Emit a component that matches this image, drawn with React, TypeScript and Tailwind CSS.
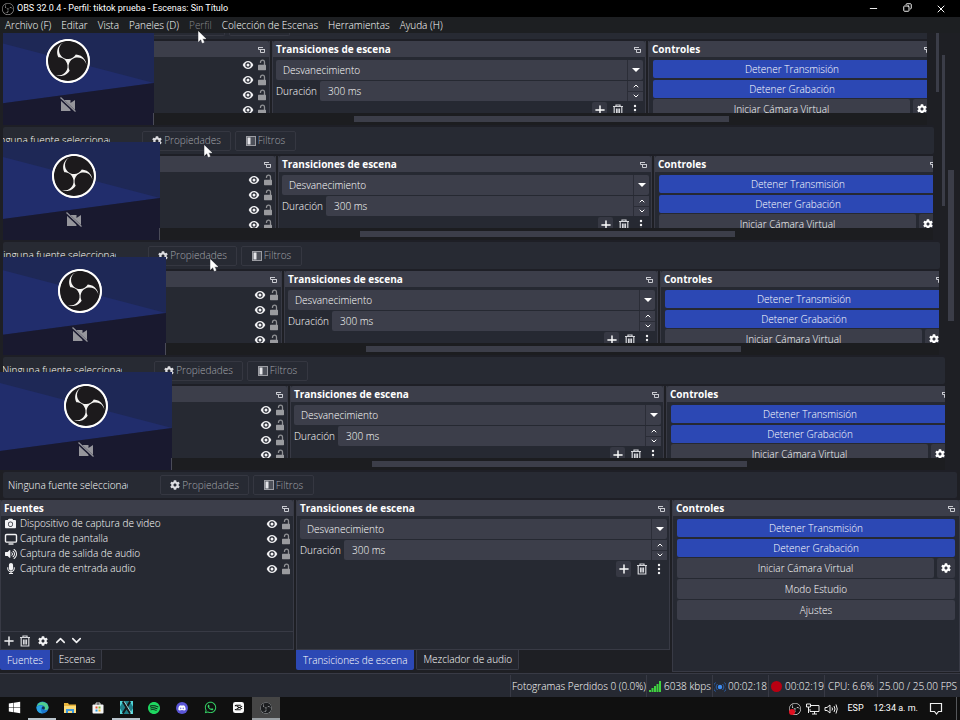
import { useId, type ReactNode } from "react";
import { SiObsstudio, SiSpotify } from "react-icons/si";
import { FaCamera, FaCog, FaDiscord, FaMicrophone, FaVolumeUp, FaWhatsapp, FaWindows } from "react-icons/fa";
import { ChevronDown, ChevronUp, Copy, Minus, Plus, X } from "lucide-react";

const sources = [
  "Dispositivo de captura de video",
  "Captura de pantalla",
  "Captura de salida de audio",
  "Captura de entrada audio",
];

function DisplayIcon() {
  return (
    <svg viewBox="0 0 14 12" className="h-3 w-3.5" fill="none" stroke="#f2f2f4" strokeWidth="1.4">
      <rect x="1.5" y="1.5" width="11" height="7.6" rx="1.2" />
      <path d="M4.500 11h5" />
    </svg>
  );
}

function EyeIcon() {
  return (
    <svg viewBox="0 0 12 10" className="h-[10px] w-3">
      <path d="M.7 5C2 2.400 3.800 1 6 1s4 1.400 5.300 4C10 7.600 8.200 9 6 9S2 7.600.7 5z" fill="#f4f4f6" />
      <circle cx="6" cy="5" r="2.700" fill="#262932" />
      <circle cx="6" cy="5" r="1.500" fill="#f4f4f6" />
    </svg>
  );
}

function LockIcon() {
  return (
    <svg viewBox="0 0 10 12" className="h-3 w-[10px]">
      <path d="M3.500 4V3.200a2 2 0 0 1 4 0V6" fill="none" stroke="#8f9094" strokeWidth="1.300" />
      <rect x="1" y="5.800" width="8" height="5.400" rx=".6" fill="#9a9b9f" />
    </svg>
  );
}

function FloatIcon() {
  return (
    <svg viewBox="0 0 8 8" className="h-2 w-2" fill="none" stroke="#c9cad0" strokeWidth="1">
      <path d="M0 1.500h5M.500 1v2.500h2" />
      <path d="M2 3.500h5M2.500 4v2.500h4V4" />
    </svg>
  );
}

function TrashIcon() {
  return (
    <svg viewBox="0 0 12 12" className="h-3 w-3" fill="none" stroke="#d6d7db" strokeWidth="1.200">
      <path d="M1 2.500h10M4 2V1h4v1M2.200 3v8h7.600V3M4.500 4.500v5M6 4.500v5M7.500 4.500v5" />
    </svg>
  );
}

function DotsIcon() {
  return (
    <svg viewBox="0 0 4 12" className="h-3 w-1" fill="#f2f2f4">
      <circle cx="2" cy="2" r="1.200" />
      <circle cx="2" cy="6" r="1.200" />
      <circle cx="2" cy="10" r="1.200" />
    </svg>
  );
}

function Cursor() {
  return (
    <svg viewBox="0 0 9 13" className="h-[13px] w-[9px]">
      <path d="M.5.5v10l2.400-2.200 1.500 3.700 1.700-.7-1.600-3.600h3.400z" fill="#fff" stroke="#fff" strokeWidth=".5" />
    </svg>
  );
}

function SourceIcon({ index }: { index: number }) {
  if (index === 0) return <FaCamera className="h-[11px] w-[11px]" />;
  if (index === 1) return <DisplayIcon />;
  if (index === 2) return <FaVolumeUp className="h-3 w-3" />;
  return <FaMicrophone className="h-[11px] w-[10px]" />;
}

function DockHeader({ title }: { title?: string }) {
  return (
    <div className="flex h-4 shrink-0 items-center justify-between rounded-t-[2px] bg-[#3c3e4a] px-[3px] pt-px">
      <h2 className="text-[10px] leading-[15px] font-bold text-white">{title}</h2>
      <button aria-label="Desacoplar panel">
        <FloatIcon />
      </button>
    </div>
  );
}

function DockBody({ children }: { children: ReactNode }) {
  return (
    <div className="flex flex-1 flex-col border-r border-b border-l border-[#383a45] bg-[#262932]">{children}</div>
  );
}

function Tabs({ active, other }: { active: string; other: string }) {
  return (
    <div className="mb-[2px] flex h-5 shrink-0 gap-[2px]">
      <button className="rounded-b-[2px] bg-[#2c48b4] px-[7px] text-white">{active}</button>
      <button className="rounded-b-[2px] border border-t-0 border-[#383a45] bg-[#24262e] px-[6px]">{other}</button>
    </div>
  );
}

function SourcesDock({ mirror }: { mirror?: boolean }) {
  return (
    <section className="flex min-w-0 flex-[294] flex-col">
      <DockBody>
        <DockHeader title={mirror ? undefined : "Fuentes"} />
        <ul className="flex flex-1 flex-col">
          {sources.map((name, i) => (
            <li key={name} className="flex h-[15px] items-center pr-[2px] pl-[2px]">
              {!mirror && (
                <>
                  <span className="mr-[2px] flex w-[15px] shrink-0 justify-center text-[#f2f2f4]">
                    <SourceIcon index={i} />
                  </span>
                  <span className="whitespace-nowrap">{name}</span>
                </>
              )}
              <button aria-label="Visibilidad" className="ml-auto">
                <EyeIcon />
              </button>
              <button aria-label="Bloqueo" className="ml-[3px]">
                <LockIcon />
              </button>
            </li>
          ))}
        </ul>
        {!mirror && (
          <div className="flex h-[18px] items-center border-t border-[#383a45] pl-[2px] text-[#f2f2f4]">
            <button aria-label="Agregar" className="flex w-3 justify-center">
              <Plus size={14} strokeWidth={2.5} className="shrink-0" />
            </button>
            <button aria-label="Eliminar" className="ml-1 flex w-3 justify-center">
              <TrashIcon />
            </button>
            <button aria-label="Propiedades" className="ml-1.5 flex w-3 justify-center">
              <FaCog size={10} />
            </button>
            <button aria-label="Subir" className="ml-[5px] flex w-3 justify-center">
              <ChevronUp size={15} strokeWidth={2.5} className="shrink-0" />
            </button>
            <button aria-label="Bajar" className="ml-1 flex w-3 justify-center">
              <ChevronDown size={15} strokeWidth={2.5} className="shrink-0" />
            </button>
          </div>
        )}
      </DockBody>
      {!mirror && <Tabs active="Fuentes" other="Escenas" />}
    </section>
  );
}

function TransitionsDock({ mirror }: { mirror?: boolean }) {
  const id = useId();
  return (
    <section className="flex min-w-0 flex-[374] flex-col">
      <DockBody>
        <DockHeader title="Transiciones de escena" />
        <div className="flex flex-col pt-[3px] pr-[2px] pl-[3px]">
          <div className="relative">
            <select
              aria-label="Transición"
              className="block h-5 w-full appearance-none rounded-[2px] bg-[#3c3e4a] pl-[7px] text-[10px] outline-none"
            >
              <option>Desvanecimiento</option>
            </select>
            <span className="pointer-events-none absolute inset-y-0 right-0 flex w-4 items-center justify-center border-l border-[#2b2d37]">
              <span className="border-x-[4px] border-t-[4px] border-x-transparent border-t-white" />
            </span>
          </div>
          <div className="mt-px flex h-5 items-center">
            <label htmlFor={id} className="w-11 shrink-0">
              Duración
            </label>
            <input
              id={id}
              type="text"
              defaultValue="300 ms"
              className="h-5 min-w-0 flex-1 rounded-l-[2px] bg-[#3c3e4a] pl-2 text-[10px] outline-none"
            />
            <span className="flex h-5 w-4 shrink-0 flex-col gap-px rounded-r-[2px] border-l border-[#2b2d37] bg-[#2b2d37]">
              <button aria-label="Aumentar" className="flex flex-1 items-center justify-center bg-[#3c3e4a]">
                <ChevronUp size={8} strokeWidth={3} />
              </button>
              <button aria-label="Reducir" className="flex flex-1 items-center justify-center bg-[#3c3e4a]">
                <ChevronDown size={8} strokeWidth={3} />
              </button>
            </span>
          </div>
          <div className="flex h-[17px] items-center justify-end text-white">
            <button
              aria-label="Agregar transición"
              className="flex h-4 w-[15px] items-center justify-center rounded-[2px] bg-[#363843]"
            >
              <Plus size={14} strokeWidth={2.5} />
            </button>
            <button aria-label="Eliminar transición" className="ml-[5px]">
              <TrashIcon />
            </button>
            <button aria-label="Más opciones" className="mr-1.5 ml-[9px]">
              <DotsIcon />
            </button>
          </div>
        </div>
      </DockBody>
      {!mirror && <Tabs active="Transiciones de escena" other="Mezclador de audio" />}
    </section>
  );
}

function ControlsDock({ mirror }: { mirror?: boolean }) {
  return (
    <section className="flex min-w-0 flex-[288] flex-col">
      <DockBody>
        <DockHeader title="Controles" />
        <div className="flex flex-col gap-px px-1 pt-[3px]">
          <div className="flex flex-col gap-[2px]">
            <button className="h-[18px] rounded-[2px] bg-[#2c48b4]">Detener Transmisión</button>
            <button className="h-[18px] rounded-[2px] bg-[#2c48b4]">Detener Grabación</button>
          </div>
          <div className="flex gap-[3px]">
            <button className="h-5 flex-1 rounded-[2px] bg-[#3c3e4a]">Iniciar Cámara Virtual</button>
            <button
              aria-label="Configurar cámara virtual"
              className="flex h-5 w-[18px] items-center justify-center rounded-[2px] bg-[#363843] text-white"
            >
              <FaCog size={10} />
            </button>
          </div>
          {!mirror && (
            <>
              <button className="h-5 rounded-[2px] bg-[#3c3e4a]">Modo Estudio</button>
              <button className="h-5 rounded-[2px] bg-[#3c3e4a]">Ajustes</button>
            </>
          )}
        </div>
      </DockBody>
    </section>
  );
}

function ContextBar({ inset, height, right }: { inset: string; height: string; right: string }) {
  return (
    <div className={`ml-[3px] shrink-0 overflow-hidden border-y-2 border-[#1e1f26] ${height} ${right}`}>
      <div className="h-full rounded-[2px] bg-[#272a33]">
        <div className={`flex h-full items-center ${inset}`}>
          <span className="mr-8 w-[120px] shrink-0 overflow-hidden whitespace-nowrap">Ninguna fuente seleccionada</span>
          <button className="flex h-5 w-[89px] shrink-0 items-center justify-center gap-[2px] rounded-[2px] border border-[#353741] text-[#a3a5ab]">
            <FaCog size={10} className="text-[#dcdce0]" />
            Propiedades
          </button>
          <button className="ml-1 flex h-5 w-[61px] shrink-0 items-center justify-center gap-[2px] rounded-[2px] border border-[#353741] text-[#a3a5ab]">
            <svg viewBox="0 0 10 10" className="size-[10px]">
              <rect x=".5" y=".5" width="9" height="9" fill="#4d5059" stroke="#9b9ca2" />
              <rect x="1.500" y="1.500" width="3" height="7" fill="#e4e4e8" />
            </svg>
            Filtros
          </button>
        </div>
      </div>
    </div>
  );
}

function CameraCard({ box }: { box: string }) {
  return (
    <div className={`absolute -top-3.5 z-10 flex h-[98px] justify-end overflow-hidden ${box}`}>
      <svg viewBox="0 0 172 98" className="h-[98px] w-[172px] shrink-0">
        <rect width="172" height="98" fill="#1e2856" />
        <path d="M0 11L172 56 0 79z" fill="#212d6c" />
        <path d="M0 79L172 56v42H0z" fill="#19192f" />
        <circle cx="86" cy="34" r="21" fill="#1c1a1c" />
        <SiObsstudio x="64" y="12" size={44} color="#f5f4f2" />
        <circle cx="86" cy="34" r="21" fill="none" stroke="#fff" strokeWidth="1.500" />
        <path d="M79 73h9.500v3l4.500-3v11l-4.500-3v3H79z" fill="#96969c" />
        <path d="M78 71l15 14" stroke="#19192f" strokeWidth="3" />
        <path d="M78.500 70.500l15 14" stroke="#96969c" strokeWidth="1.200" />
      </svg>
      <span className="absolute right-0 bottom-0 h-3 w-px bg-[#4a4b58]" />
    </div>
  );
}

type MirrorProps = { clip: string; shift: string; card: string; bar: ReactNode };

function MirrorBand({ clip, shift, card, bar }: MirrorProps) {
  return (
    <div className="relative flex flex-col">
      <div className={`h-[72px] overflow-hidden ${clip}`}>
        <div className={`-mr-[9px] flex h-24 gap-[2px] ${shift}`}>
          <SourcesDock mirror />
          <TransitionsDock mirror />
          <ControlsDock mirror />
        </div>
      </div>
      <div className={`h-3 overflow-hidden bg-[#1c1d20] ${clip}`}>
        <div className={`-mr-[9px] flex h-full items-center ${shift}`}>
          <div className="flex-[378]" />
          <div className="h-1.5 flex-[375] bg-[#3c3e49]" />
          <div className="flex-[207]" />
        </div>
      </div>
      {bar}
      <CameraCard box={card} />
    </div>
  );
}

function StatusItem({ children }: { children: ReactNode }) {
  return <div className="flex items-center border-l border-[#383a45] pt-px">{children}</div>;
}

function TaskButton({ label, state, children }: { label: string; state?: string; children: ReactNode }) {
  return (
    <button
      aria-label={label}
      className={`flex h-full w-7 items-center justify-center border-b-2 ${state ?? "border-transparent"}`}
    >
      {children}
    </button>
  );
}

const menus = ["Archivo (F)", "Editar", "Vista", "Paneles (D)", "Perfil", "Colección de Escenas", "Herramientas", "Ayuda (H)"];

export default function App() {
  return (
    <div className="flex min-h-screen flex-col overflow-hidden bg-[#1e1f24] font-['Open_Sans','Noto_Sans',sans-serif] text-[10px] leading-[15px] font-light text-white">
      <header className="flex h-[17px] items-center bg-black">
        <SiObsstudio className="ml-[2px] h-3 w-3 text-[#a9a9a9]" />
        <h1 className="ml-[3px] flex-1 font-[Roboto,sans-serif] text-[9px] font-normal">
          OBS 32.0.4 - Perfil: tiktok prueba - Escenas: Sin Título
        </h1>
        <div className="mr-[2px] flex">
          <button aria-label="Minimizar" className="flex w-[34px] justify-center">
            <Minus size={11} strokeWidth={2} />
          </button>
          <button aria-label="Restaurar" className="flex w-[34px] justify-center">
            <Copy size={9} strokeWidth={2.5} className="-scale-x-100" />
          </button>
          <button aria-label="Cerrar" className="flex w-[34px] justify-center">
            <X size={12} strokeWidth={2} />
          </button>
        </div>
      </header>

      <nav className="flex h-4 items-center bg-[#1d1f22]">
        {menus.map((m) => (
          <button key={m} className={`px-[5px] whitespace-nowrap ${m === "Perfil" ? "text-[#85878b]" : ""}`}>
            {m}
          </button>
        ))}
      </nav>

      <main className="relative flex flex-col overflow-hidden">
        <div className="mr-[33px] ml-[3px] flex h-2 gap-1 border-b-2 border-[#1e1f26] bg-[#272a33] pl-[133px]">
          <div className="h-[3px] w-[89px] rounded-b-[2px] border border-t-0 border-[#353741]" />
          <div className="h-[3px] w-[61px] rounded-b-[2px] border border-t-0 border-[#353741]" />
        </div>
        <MirrorBand
          clip="ml-[3px] mr-[33px]"
          shift="-ml-[27px]"
          card="left-[3px] w-[151px]"
          bar={<ContextBar inset="-ml-[13px]" height="h-[31px]" right="mr-[26px]" />}
        />
        <MirrorBand
          clip="ml-[3px] mr-[27px]"
          shift="-ml-[21px]"
          card="left-[3px] w-[157px]"
          bar={<ContextBar inset="-ml-[7px]" height="h-[31px]" right="mr-5" />}
        />
        <MirrorBand
          clip="ml-[3px] mr-[21px]"
          shift="-ml-[15px]"
          card="left-[3px] w-[163px]"
          bar={<ContextBar inset="-ml-px" height="h-[31px]" right="mr-[15px]" />}
        />
        <MirrorBand
          clip="mr-[15px]"
          shift="-ml-1.5"
          card="left-0 w-[172px]"
          bar={<ContextBar inset="ml-[5px]" height="h-[30px]" right="mr-[3px]" />}
        />
        <div className="absolute top-0 right-[21px] h-[59px] w-[3px] bg-[#3b3d48]" />
        <div className="absolute top-[22px] right-[15px] h-[151px] w-[3px] bg-[#3b3d48]" />
        <div className="absolute top-[137px] right-1.5 h-[151px] w-1.5 bg-[#3b3d48]" />
        <div className="absolute top-[112px] left-[204px] z-20">
          <Cursor />
        </div>
        <div className="absolute top-[226px] left-[210px] z-20">
          <Cursor />
        </div>
      </main>
      <div className="absolute top-[31px] left-[198px] z-20">
        <Cursor />
      </div>

      <div className="flex min-h-[172px] flex-1 gap-[2px]">
        <SourcesDock />
        <TransitionsDock />
        <ControlsDock />
      </div>

      <footer className="mt-px flex h-6 shrink-0 justify-end border-t border-[#383a45] bg-[#262932] pt-px">
        <StatusItem>
          <span className="w-[135px] pl-px whitespace-nowrap">Fotogramas Perdidos 0 (0.0%)</span>
        </StatusItem>
        <StatusItem>
          <svg viewBox="0 0 12 12" className="mx-[2px] h-3 w-3" fill="#3fd23f">
            <path d="M0 9h2v2H0zM2.500 7h2v4h-2zM5 5h2v6H5zM7.500 3h2v8h-2zM10 0h2v11h-2z" />
          </svg>
          <span className="w-[49px] pl-px whitespace-nowrap">6038 kbps</span>
        </StatusItem>
        <StatusItem>
          <svg viewBox="0 0 12 12" className="mx-px h-3 w-3" fill="none" stroke="#2b62b0">
            <circle cx="6" cy="6" r="2.200" fill="#3f8cf0" stroke="none" />
            <path d="M3.500 3a4 4 0 0 0 0 6M8.500 3a4 4 0 0 1 0 6M1.500 1.500a6 6 0 0 0 0 9M10.500 1.500a6 6 0 0 1 0 9" />
          </svg>
          <span className="w-[41px] pl-px">00:02:18</span>
        </StatusItem>
        <StatusItem>
          <span className="mx-[2px] size-[11px] rounded-full bg-[#b80012]" />
          <span className="w-10 pl-px">00:02:19</span>
        </StatusItem>
        <StatusItem>
          <span className="w-[52px] pl-[3px] whitespace-nowrap">CPU: 6.6%</span>
        </StatusItem>
        <StatusItem>
          <span className="w-[82px] pl-px whitespace-nowrap">25.00 / 25.00 FPS</span>
        </StatusItem>
      </footer>

      <div className="flex h-[23px] shrink-0 items-center bg-[#101010]">
        <TaskButton label="Inicio">
          <FaWindows size={13} />
        </TaskButton>
        <TaskButton label="Edge" state="border-[#b9c4cc]">
          <svg viewBox="0 0 14 14" className="size-[13px]">
            <circle cx="7" cy="7" r="6.500" fill="#1b78d0" />
            <path d="M.6 6.500A6.500 6.500 0 0 1 13.500 7c0 2-1.500 3-3.500 2.600C8.500 9.300 9.500 8 9 6.500 8 4 3 3.500.6 6.500z" fill="#4fcf8f" />
            <path d="M.6 6.500C3 4 6.500 4.500 7 6c-2 1-2.500 4 0 7.500C3 13.500.3 10.500.6 6.500z" fill="#2aa3e4" />
            <circle cx="8" cy="7.500" r="1.600" fill="#10324f" />
          </svg>
        </TaskButton>
        <TaskButton label="Explorador">
          <svg viewBox="0 0 14 12" className="h-3 w-3.5">
            <path d="M1 1h4l1 1.500h7V11H1z" fill="#e9b53c" />
            <path d="M1 4h12v7H1z" fill="#fbdc7a" />
            <path d="M3 11V7h8v4H9V9H5v2z" fill="#3f9be0" />
          </svg>
        </TaskButton>
        <TaskButton label="Tienda">
          <svg viewBox="0 0 12 12" className="size-3">
            <path d="M4 3V1h4v2" fill="none" stroke="#ddd" />
            <rect x=".5" y="2.500" width="11" height="9" rx="1" fill="#f4f4f4" />
            <path d="M3.500 4.500h2v2h-2z" fill="#e8502e" />
            <path d="M6.500 4.500h2v2h-2z" fill="#75b72c" />
            <path d="M3.500 7.500h2v2h-2z" fill="#2a9fe0" />
            <path d="M6.500 7.500h2v2h-2z" fill="#f3b61f" />
          </svg>
        </TaskButton>
        <TaskButton label="X" state="border-[#b9c4cc]">
          <svg viewBox="0 0 14 14" className="size-[13px]">
            <rect width="14" height="14" fill="#1f7f88" />
            <path d="M0 0h4L0 6zM14 0v6l-4-6zM0 14V8l4 6zM14 14h-4l4-6z" fill="#52d5d8" />
            <path d="M3 .5l8 13M11 .5l-8 13" fill="none" stroke="#15181a" strokeWidth="2.200" />
            <path d="M4.500 .5l8 13" fill="none" stroke="#d6f4f4" strokeWidth=".8" />
          </svg>
        </TaskButton>
        <TaskButton label="Spotify">
          <SiSpotify size={12} color="#1ed760" />
        </TaskButton>
        <TaskButton label="Discord">
          <span className="flex size-3 items-center justify-center rounded-full bg-[#5a55d6]">
            <FaDiscord size={8} />
          </span>
        </TaskButton>
        <TaskButton label="WhatsApp">
          <FaWhatsapp size={13} color="#35d366" />
        </TaskButton>
        <TaskButton label="CapCut">
          <svg viewBox="0 0 12 12" className="size-[11px]">
            <rect width="12" height="12" rx="2.500" fill="#fafafa" />
            <path d="M10 4.500L4 7.500M10 7.500L4 4.500M8.500 3.500h-5a1 1 0 0 0-1 1M8.500 8.500h-5a1 1 0 0 1-1-1" fill="none" stroke="#111" strokeWidth="1.200" />
          </svg>
        </TaskButton>
        <TaskButton label="OBS" state="border-[#9aa0a4] bg-[#454545]">
          <SiObsstudio size={12} color="#a9acae" className="rounded-full bg-[#1c1e20]" />
        </TaskButton>
        <div className="ml-auto flex h-full items-center font-[Roboto,sans-serif] text-[9px] font-normal">
          <span className="relative mr-[5px]">
            <SiObsstudio size={12} />
            <span className="absolute bottom-0 left-0 size-[6px] rounded-full bg-[#e01020]" />
          </span>
          <svg viewBox="0 0 14 12" className="mr-1 h-3 w-3.5" fill="none" stroke="#eee">
            <path d="M5 2.500h8v6H4V6M6 11h5M8.500 8.500V11M.5 1h4v3h-4zM2.500 4v6" />
          </svg>
          <svg viewBox="0 0 14 12" className="mr-[9px] h-3 w-3.5" fill="none" stroke="#eee">
            <path d="M1 4.500h2L6 2v8L3 7.500H1zM8 4.500q1 1.500 0 3M10 3q2 3 0 6M12 1.500q2.500 4.500 0 9" />
          </svg>
          <span className="mr-[10px]">ESP</span>
          <span className="mr-[11px] whitespace-nowrap">12:34 a. m.</span>
          <button aria-label="Notificaciones" className="mr-[13px]">
            <svg viewBox="0 0 14 13" className="h-[13px] w-3.5" fill="none" stroke="#eee" strokeWidth="1.200">
              <path d="M1.500 1.500h11v8h-3L7.500 12l-2-2.500h-4z" />
            </svg>
          </button>
          <span className="mr-[3px] h-full w-px bg-[#55575a]" />
        </div>
      </div>
    </div>
  );
}
